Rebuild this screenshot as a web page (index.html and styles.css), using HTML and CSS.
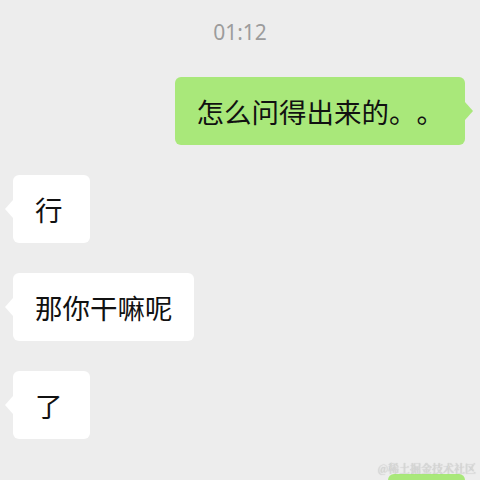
FILE: index.html
```html
<!DOCTYPE html>
<html lang="zh">
<head>
<meta charset="utf-8">
<link rel="stylesheet" href="styles.css">
</head>
<body>
<div class="chat">
  <div class="time">01:12</div>
  <div class="row right"><div class="bubble green">怎么问得出来的。。</div></div>
  <div class="row left"><div class="bubble white">行</div></div>
  <div class="row left"><div class="bubble white">那你干嘛呢</div></div>
  <div class="row left"><div class="bubble white">了</div></div>
  <div class="row right last"><div class="bubble green stub">&nbsp;</div></div>
</div>
<div class="watermark">@稀土掘金技术社区</div>
</body>
</html>
```
FILE: styles.css
```css
html, body {
  margin: 0;
  padding: 0;
  width: 480px;
  height: 480px;
  overflow: hidden;
  background: #ededed;
  font-family: "Noto Sans CJK SC", "Noto Sans", sans-serif;
}
.chat {
  display: flex;
  flex-direction: column;
  gap: 30px;
  padding: 0 15px 0 13px;
}
.time {
  text-align: center;
  color: #9c9c9c;
  font-family: "Noto Sans", sans-serif;
  font-size: 21px;
  line-height: 24px;
  margin: 20px -15px 3px -13px;
}
.row {
  display: flex;
}
.row.right { justify-content: flex-end; }
.row.left { justify-content: flex-start; }
.row.last { margin-top: 5px; }
.bubble {
  position: relative;
  box-sizing: border-box;
  min-width: 77px;
  font-size: 27.5px;
  line-height: 34px;
  padding: 17px 21px 17px 22px;
  border-radius: 6px;
  color: #111;
  text-spacing-trim: space-all;
  font-feature-settings: "palt" 0, "halt" 0;
}
.green { background: #a9e87a; }
.white { background: #ffffff; }
.stub { width: 77px; }
.bubble::after {
  content: "";
  position: absolute;
  top: 25px;
  width: 0;
  height: 0;
  border-top: 9px solid transparent;
  border-bottom: 9px solid transparent;
}
.green::after {
  right: -8px;
  border-left: 8px solid #a9e87a;
}
.white::after {
  left: -8px;
  border-right: 8px solid #ffffff;
}
.watermark {
  position: absolute;
  right: 4px;
  top: 460px;
  font-family: "Noto Serif CJK SC", "Noto Sans CJK SC", serif;
  font-size: 11px;
  line-height: 16px;
  color: #dcdcdc;
  text-shadow: 0 0 1px rgba(0,0,0,0.3);
}
```
